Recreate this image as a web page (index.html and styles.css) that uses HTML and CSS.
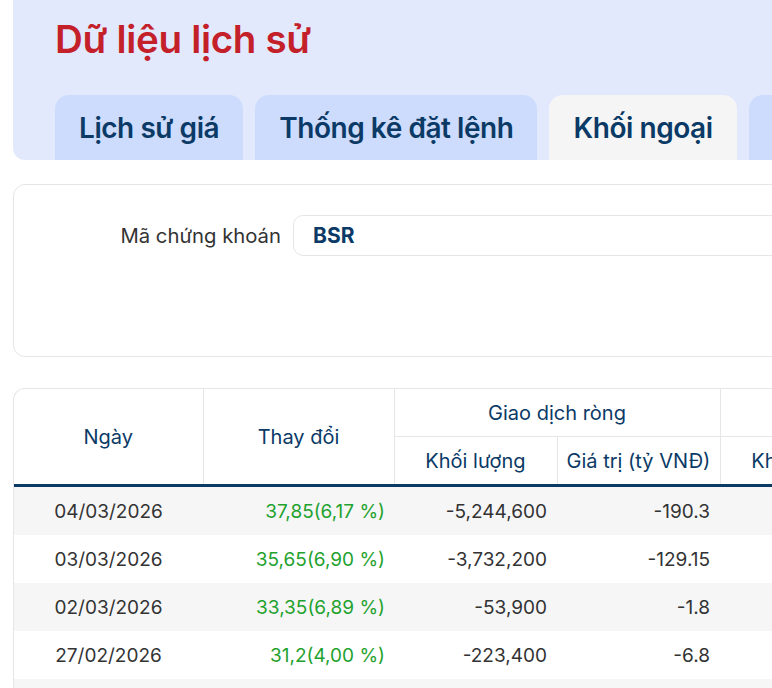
FILE: index.html
```html
<!DOCTYPE html>
<html>
  <head>
    <title>Dữ liệu lịch sử</title>
    <meta charset="UTF-8" />
    <link rel="stylesheet" href="styles.css">
  </head>

  <body>
    <div class="page">

      <div class="hero">
        <h1 class="hero-title">Dữ liệu lịch sử</h1>
        <div class="tabs">
          <div class="tab">Lịch sử giá</div>
          <div class="tab">Thống kê đặt lệnh</div>
          <div class="tab active">Khối ngoại</div>
          <div class="tab">Tự doanh</div>
        </div>
      </div>

      <div class="filter-card">
        <div class="filter-row">
          <label class="filter-label" for="inputSymbol">Mã chứng khoán</label>
          <input id="inputSymbol" class="filter-input" type="text" value="BSR">
        </div>
      </div>

      <div class="table-card">
        <table class="data-table">
          <colgroup>
            <col class="col-date">
            <col class="col-change">
            <col class="col-num">
            <col class="col-num">
            <col class="col-num">
            <col class="col-num">
          </colgroup>
          <thead>
            <tr>
              <th rowspan="2">Ngày</th>
              <th rowspan="2">Thay đổi</th>
              <th colspan="2">Giao dịch ròng</th>
              <th colspan="2">Mua</th>
            </tr>
            <tr>
              <th>Khối lượng</th>
              <th>Giá trị (tỷ VNĐ)</th>
              <th>Khối lượng</th>
              <th>Giá trị (tỷ VNĐ)</th>
            </tr>
          </thead>
          <tbody>
            <tr>
              <td class="cell-date">04/03/2026</td>
              <td class="cell-up">37,85(6,17 %)</td>
              <td>-5,244,600</td>
              <td>-190.3</td>
              <td>1,120,500</td>
              <td>40.6</td>
            </tr>
            <tr>
              <td class="cell-date">03/03/2026</td>
              <td class="cell-up">35,65(6,90 %)</td>
              <td>-3,732,200</td>
              <td>-129.15</td>
              <td>980,300</td>
              <td>33.9</td>
            </tr>
            <tr>
              <td class="cell-date">02/03/2026</td>
              <td class="cell-up">33,35(6,89 %)</td>
              <td>-53,900</td>
              <td>-1.8</td>
              <td>1,410,200</td>
              <td>46.2</td>
            </tr>
            <tr>
              <td class="cell-date">27/02/2026</td>
              <td class="cell-up">31,2(4,00 %)</td>
              <td>-223,400</td>
              <td>-6.8</td>
              <td>612,000</td>
              <td>18.9</td>
            </tr>
            <tr>
              <td class="cell-date">26/02/2026</td>
              <td class="cell-up">30,0(1,35 %)</td>
              <td>-88,100</td>
              <td>-2.6</td>
              <td>540,700</td>
              <td>16.1</td>
            </tr>
          </tbody>
        </table>
      </div>

    </div>
  </body>
</html>
```

FILE: styles.css
```css
html,
body {
  margin: 0;
  overflow: hidden;
  background-color: #fff;
}
body {
  font-family: Inter, "Noto Sans", sans-serif;
  color: #333;
}

.page {
  width: 1000px;
  padding-left: 13px;
}

/* top panel with title and tabs */
.hero {
  background-color: #e3e9fd;
  border-bottom-left-radius: 12px;
  padding: 14px 0 0 42px;
}
.hero-title {
  margin: 0;
  font-size: 38.5px;
  line-height: 50px;
  font-weight: 600;
  color: #c4202a;
  letter-spacing: -0.3px;
}
.tabs {
  display: flex;
  column-gap: 12px;
  margin-top: 31px;
}
.tab {
  height: 65px;
  padding: 0 24px;
  display: flex;
  align-items: center;
  border-radius: 14px 14px 0 0;
  background-color: #cddcfc;
  color: #0b3a66;
  font-size: 28px;
  font-weight: 600;
  letter-spacing: -0.45px;
  white-space: nowrap;
}
.tab.active {
  background-color: #f5f5f6;
}

/* filter box */
.filter-card {
  margin-top: 24px;
  height: 173px;
  box-sizing: border-box;
  border: 1px solid #e6e6e6;
  border-radius: 12px;
  padding-top: 30px;
}
.filter-row {
  display: flex;
  align-items: center;
  column-gap: 12px;
}
.filter-label {
  width: 267px;
  text-align: right;
  font-size: 20.3px;
  color: #333;
}
.filter-input {
  width: 600px;
  height: 41px;
  box-sizing: border-box;
  border: 1px solid #e6e6e6;
  border-radius: 10px;
  padding: 0 19px;
  font-family: inherit;
  font-size: 21px;
  font-weight: 700;
  color: #0b3a66;
  outline: none;
}

/* data table */
.table-card {
  margin-top: 31px;
  border: 1px solid #e6e6e6;
  border-bottom: none;
  border-top-left-radius: 12px;
  overflow: hidden;
}
.data-table {
  border-collapse: collapse;
  table-layout: fixed;
  width: 1032px;
  font-size: 19px;
}
.col-date {
  width: 189px;
}
.col-change {
  width: 191px;
}
.col-num {
  width: 163px;
}
.data-table th {
  font-weight: 400;
  font-size: 20px;
  color: #0b3a66;
  height: 47px;
  padding: 0;
  border-left: 1px solid #e6e6e6;
  border-bottom: 1px solid #e6e6e6;
}
.data-table thead tr:first-child th:first-child {
  border-left: none;
}
.data-table thead tr:last-child th,
.data-table thead th[rowspan] {
  border-bottom: 3px solid #0b3a66;
}
.data-table td {
  height: 48px;
  padding: 0 10px;
  text-align: right;
  color: #333;
}
.data-table td.cell-up {
  padding-right: 9px;
  color: #1fa22e;
}
.data-table tbody tr:nth-child(odd) {
  background-color: #f6f6f7;
}
.data-table .cell-date {
  text-align: center;
}
```
